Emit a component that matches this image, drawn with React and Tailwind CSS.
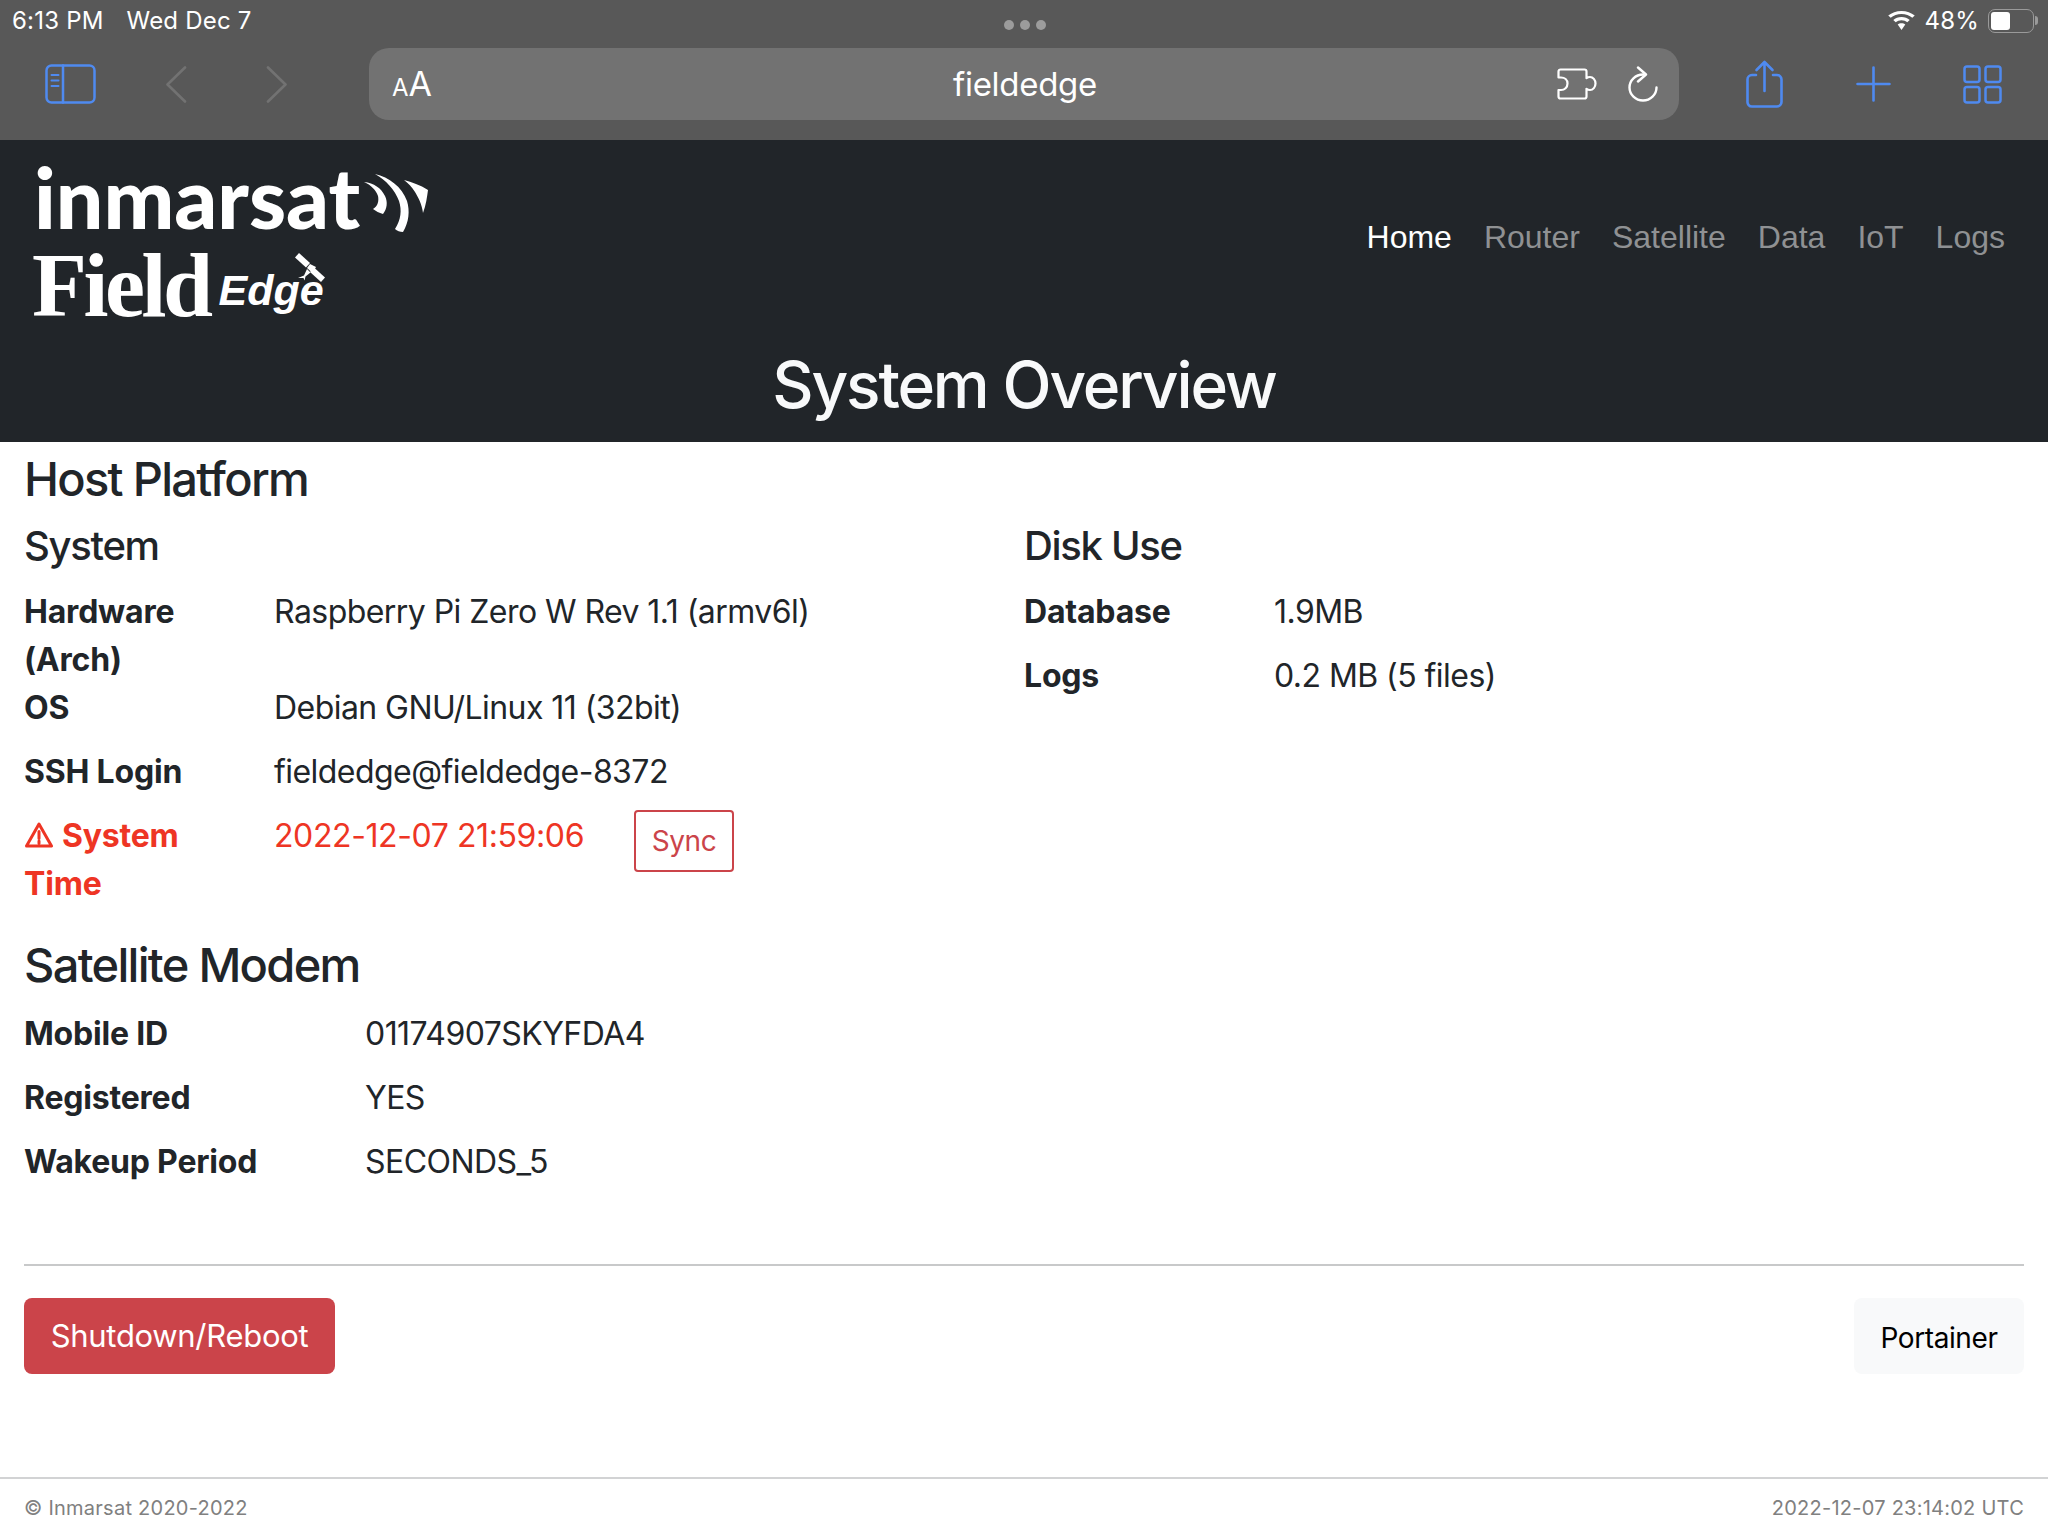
import React from 'react'

const BLUE = '#4f8af0'

function SidebarIcon() {
  return (
    <svg width="51" height="40" viewBox="0 0 51 40" fill="none" stroke={BLUE} strokeWidth="2.5" strokeLinecap="round">
      <rect x="1.5" y="1.5" width="48" height="37" rx="5" />
      <path d="M18 1.5v37" />
      <path d="M6.500 11h7M6.500 16.500h7M6.500 22h7" strokeWidth="2" />
    </svg>
  )
}

function Chevron({ flip }) {
  return (
    <svg width="21" height="37" viewBox="0 0 21 37" fill="none" stroke="#727272" strokeWidth="2.6" strokeLinecap="round" strokeLinejoin="round">
      <path d={flip ? 'M2 1.500 19.500 18.500 2 35.500' : 'M19 1.500 1.500 18.500 19 35.500'} />
    </svg>
  )
}

function PuzzleIcon() {
  return (
    <svg width="40" height="32" viewBox="0 0 40 32" fill="none" stroke="white" strokeWidth="2.2" strokeLinejoin="round">
      <path d="M1.500 3.500a2 2 0 0 1 2-2h24a2 2 0 0 1 2 2v6.700c1-.8 2.200-1.200 3.500-1.200 3 0 5.500 2.900 5.500 6.500S36 22 33 22c-1.300 0-2.500-.4-3.500-1.200v7.700a2 2 0 0 1-2 2h-24a2 2 0 0 1-2-2V22h2.500c3.600 0 6.500-2.700 6.500-6.500S7.600 9.500 4 9.500H1.500z" />
    </svg>
  )
}

function ReloadIcon() {
  return (
    <svg width="30" height="36" viewBox="0 0 30 36" fill="none" stroke="white" strokeWidth="2.400" strokeLinecap="round" strokeLinejoin="round">
      <path d="M15 8.500C7.500 8.500 1.500 14.500 1.500 21.500S7.500 34.500 15 34.500 28.500 28.500 28.500 21.500" />
      <path d="M10 1.500 18 8.500l-8 7" />
    </svg>
  )
}

function ShareIcon() {
  return (
    <svg width="37" height="48" viewBox="0 0 37 48" fill="none" stroke={BLUE} strokeWidth="2.600" strokeLinecap="round" strokeLinejoin="round">
      <path d="M10 15H6a4.500 4.500 0 0 0-4.500 4.500v22A4.500 4.500 0 0 0 6 46.500h25a4.500 4.500 0 0 0 4.500-4.500V19.500A4.500 4.500 0 0 0 31 15h-4" />
      <path d="M18.500 31V2M10.500 10 18.500 2l8 8" />
    </svg>
  )
}

function PlusIcon() {
  return (
    <svg width="35" height="36" viewBox="0 0 35 36" fill="none" stroke={BLUE} strokeWidth="2.600" strokeLinecap="round">
      <path d="M17.500 1.500v33M1.500 18h32" />
    </svg>
  )
}

function GridIcon() {
  return (
    <svg width="39" height="39" viewBox="0 0 39 39" fill="none" stroke={BLUE} strokeWidth="2.500">
      <rect x="1.500" y="1.500" width="15" height="15.500" rx="2.500" />
      <rect x="22.500" y="1.500" width="15" height="15.500" rx="2.500" />
      <rect x="1.500" y="22" width="15" height="15.500" rx="2.500" />
      <rect x="22.500" y="22" width="15" height="15.500" rx="2.500" />
    </svg>
  )
}

function WifiIcon() {
  return (
    <svg width="27" height="19" viewBox="0 0 22 18" fill="white" preserveAspectRatio="none">
      <path d="M11 0C6.800 0 3 1.600.2 4.300l2 2.100C4.500 4.200 7.600 2.900 11 2.900s6.500 1.300 8.800 3.500l2-2.100C19 1.600 15.200 0 11 0z" />
      <path d="M11 5.800c-2.600 0-5 1-6.700 2.700l2 2.100c1.200-1.200 2.900-1.900 4.700-1.900s3.500.7 4.700 1.900l2-2.100C16 6.800 13.600 5.800 11 5.800z" />
      <path d="M11 11.500c-1.200 0-2.300.5-3.100 1.300L11 18l3.100-5.200c-.8-.8-1.900-1.300-3.100-1.300z" />
    </svg>
  )
}

function Battery() {
  return (
    <div className="flex items-center">
      <div className="w-[46px] h-[24px] rounded-[7px] border-[1.5px] border-[#9a9a9a] p-[2px]">
        <div className="w-[19px] h-full rounded-[3px] bg-white"></div>
      </div>
      <div className="w-[3px] h-[9px] ml-[1px] rounded-r-full bg-[#9a9a9a]"></div>
    </div>
  )
}

function Swoosh() {
  return (
    <svg width="66" height="60" viewBox="0 0 66 60" fill="white" className="ml-[3px] mb-[1px]">
      <path d="M1 8c10 1 17 6 21 14 3 6 2 13-2 18-4-1-7-3-10-5 5-3 6-8 5-13C13 16 8 11 1 8z" />
      <path d="M12 0c14 3 27 13 32 27 3 10 2 21-4 31-3 0-6-1-8-3 6-9 7-19 4-28C32 16 23 6 12 0z" />
      <path d="M41 6c8 2 16 5 24 10-1 7-2 15-5 23-1-9-5-16-8-21-3-5-7-9-11-12z" />
    </svg>
  )
}

function SatelliteGlyph() {
  return (
    <svg width="30" height="30" viewBox="0 0 30 30" className="absolute left-[76px] -top-[8px]" fill="white">
      <path d="M4 0 15 10l-4 4.500L0 4.500z" />
      <path d="M19 14.500 30 24.500l-4 4.500L15 19z" />
      <path d="M12 15l3-4 6 3-3.500 6z" />
      <path d="M3 25l6-2.500 3-6.500 3.500 3.500-5 4-1 4-1-2.500z" />
    </svg>
  )
}

function Logo() {
  return (
    <div className="flex flex-col">
      <div className="flex items-end h-[76px]">
        <span className="font-['Lato',sans-serif] font-black text-[84px] leading-[76px] text-white">inmarsat</span>
        <Swoosh />
      </div>
      <div className="flex items-end h-[84px] mt-[9px] -ml-[2px]">
        <span className="font-['Liberation_Serif',serif] font-bold text-[90px] leading-[84px] tracking-[-3.500px] text-white">Field</span>
        <span className="relative font-['Liberation_Sans',sans-serif] font-bold italic text-[43px] leading-[58px] text-white ml-[9px] mb-[9px]">
          Edge
          <SatelliteGlyph />
        </span>
      </div>
    </div>
  )
}

function InfoRow({ label, value, labelWidth }) {
  return (
    <div className="flex mb-4">
      <div className={`${labelWidth} font-bold tracking-[-0.2px] pr-6`}>{label}</div>
      <div>{value}</div>
    </div>
  )
}

export default function App() {
  const nav = ['Router', 'Satellite', 'Data', 'IoT', 'Logs']

  return (
    <div className="min-h-screen flex flex-col bg-white text-[#212529] font-['Inter',sans-serif] text-[32px] leading-[48px] tracking-[-0.55px]">
      {/* Safari chrome */}
      <div className="h-[140px] bg-[#585858] shrink-0">
        <div className="h-[40px] grid grid-cols-3 items-center pl-[12px] pr-[10px] pt-[1px] text-[24px] leading-[28px] tracking-[0.2px] text-white">
          <div className="flex gap-[23px]">
            <span>6:13 PM</span>
            <span>Wed Dec 7</span>
          </div>
          <div className="flex justify-center gap-[6px] pt-[8px]">
            <span className="w-[10px] h-[10px] rounded-full bg-[#9c9c9c]"></span>
            <span className="w-[10px] h-[10px] rounded-full bg-[#9c9c9c]"></span>
            <span className="w-[10px] h-[10px] rounded-full bg-[#9c9c9c]"></span>
          </div>
          <div className="flex justify-end items-center gap-[9px]">
            <WifiIcon />
            <span>48%</span>
            <Battery />
          </div>
        </div>
        <div className="h-[88px] flex items-center pl-[45px] tracking-normal">
          <SidebarIcon />
          <div className="ml-[70px]"><Chevron /></div>
          <div className="ml-[79px]"><Chevron flip /></div>
          <div className="ml-[82px] w-[1310px] h-[72px] rounded-[20px] bg-[#727272] grid grid-cols-[1fr_auto_1fr] items-center pl-[23px] pr-[21px] text-white">
            <span className="flex items-baseline text-[34px] leading-none">
              <span className="text-[24px]">A</span>A
            </span>
            <span className="text-[33px] leading-none tracking-[-0.3px]">fieldedge</span>
            <div className="flex items-center justify-end gap-[31px]">
              <PuzzleIcon />
              <ReloadIcon />
            </div>
          </div>
          <div className="ml-[67px] -mt-[1px]"><ShareIcon /></div>
          <div className="ml-[73px]"><PlusIcon /></div>
          <div className="ml-[72px]"><GridIcon /></div>
        </div>
      </div>

      {/* Page nav */}
      <div className="h-[302px] bg-[#212529] shrink-0 flex flex-col tracking-normal">
        <div className="flex justify-between pl-[34px] pr-[43px] pt-[19px]">
          <Logo />
          <div className="flex gap-[32px] pt-[54px] font-['Liberation_Sans',sans-serif] text-[#8f9193] text-[32px]">
            <span className="text-white">Home</span>
            {nav.map((item) => (
              <span key={item}>{item}</span>
            ))}
          </div>
        </div>
        <h1 className="text-center text-[#f8f9fa] text-[64px] font-[450] leading-[72px] tracking-[-2.150px] mt-[21px]">System Overview</h1>
      </div>

      {/* Main */}
      <div className="flex-1 px-6 pt-[9px] flex flex-col">
        <h2 className="text-[47px] font-[450] leading-[56px] tracking-[-1.700px] mb-[15px]">Host Platform</h2>
        <div className="flex">
          <div className="w-[1000px]">
            <h3 className="text-[40px] font-[450] leading-[48px] tracking-[-1.300px] mb-[18px]">System</h3>
            <InfoRow labelWidth="w-[250px]" label={<span className="block -mb-4">Hardware<br />(Arch)</span>} value="Raspberry Pi Zero W Rev 1.1 (armv6l)" />
            <InfoRow labelWidth="w-[250px]" label="OS" value="Debian GNU/Linux 11 (32bit)" />
            <InfoRow labelWidth="w-[250px]" label="SSH Login" value="fieldedge@fieldedge-8372" />
            <div className="flex text-[#ee3524] mb-[16px]">
              <div className="w-[250px] font-bold tracking-[-0.2px]">
                <svg width="28" height="28" viewBox="0 0 28 28" fill="none" stroke="currentColor" strokeWidth="3" strokeLinejoin="round" className="inline-block ml-[1px] mr-[9px] -mt-[7px]">
                  <path d="M14 3 26.500 25h-25z" />
                  <path d="M14 10.500v7M14 20v2.500" strokeLinecap="round" />
                </svg>
                System<br />Time
              </div>
              <div className="w-[360px] tracking-[-0.4px]">2022-12-07 21:59:06</div>
              <button className="-mt-[2px] h-[62px] w-[100px] rounded-[4px] border-2 border-[#cb444a] text-[#cb444a] text-[28px] leading-none tracking-[-0.4px]">Sync</button>
            </div>
          </div>
          <div>
            <h3 className="text-[40px] font-[450] leading-[48px] tracking-[-1.300px] mb-[18px]">Disk Use</h3>
            <InfoRow labelWidth="w-[250px]" label="Database" value="1.9MB" />
            <InfoRow labelWidth="w-[250px]" label="Logs" value="0.2 MB (5 files)" />
          </div>
        </div>
        <h2 className="text-[47px] font-[450] leading-[56px] tracking-[-1.700px] mt-[13px] mb-[17px]">Satellite Modem</h2>
        <InfoRow labelWidth="w-[341px]" label="Mobile ID" value="01174907SKYFDA4" />
        <InfoRow labelWidth="w-[341px]" label="Registered" value="YES" />
        <InfoRow labelWidth="w-[341px]" label="Wakeup Period" value="SECONDS_5" />
        <hr className="mt-[62px] border-0 border-t-2 border-[#c8c9ca]" />
        <div className="flex justify-between mt-[32px]">
          <button className="h-[76px] w-[311px] rounded-[8px] bg-[#cb444a] text-white text-[31px] tracking-[-0.3px]">Shutdown/Reboot</button>
          <button className="h-[76px] w-[170px] rounded-[8px] bg-[#f8f9fa] text-black text-[28px] tracking-[-0.4px] pt-[3px]">Portainer</button>
        </div>
      </div>

      {/* Footer */}
      <div className="h-[59px] border-t-2 border-[#d2d3d4] flex items-center justify-between px-6 pt-[1px] text-[20px] leading-none tracking-[0.25px] text-[#808080] shrink-0">
        <span>© Inmarsat 2020-2022</span>
        <span>2022-12-07 23:14:02 UTC</span>
      </div>
    </div>
  )
}
